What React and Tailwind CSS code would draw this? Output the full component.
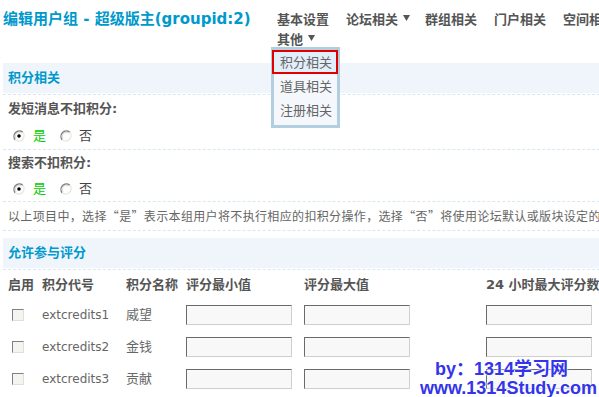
import React from "react";

function Radio({ checked }) {
  return (
    <svg width="12" height="12" viewBox="0 0 12 12" className="block">
      <circle cx="6" cy="6" r="5.4" fill="#fff" />
      <path d="M2.2 9.8 A5.4 5.4 0 0 1 9.8 2.2" stroke="#808080" fill="none" strokeWidth="1.3" />
      <path d="M9.8 2.2 A5.4 5.4 0 0 1 2.2 9.8" stroke="#e6e6de" fill="none" strokeWidth="1.3" />
      <path d="M3 8.6 A4 4 0 0 1 8.6 3" stroke="#c8c8c0" fill="none" strokeWidth="0.8" />
      {checked && <circle cx="6" cy="6" r="1.8" fill="#000" />}
    </svg>
  );
}

function Arrow() {
  return (
    <svg width="7" height="6" viewBox="0 0 7 6" className="block ml-[5px] -mt-[2px]">
      <path d="M0 0 L7 0 L3.5 6 Z" fill="#555" />
    </svg>
  );
}

function Checkbox() {
  return (
    <div className="w-[12px] h-[12px] border border-t-[#808080] border-l-[#808080] border-r-[#e0e0d8] border-b-[#e0e0d8] bg-[#f4f4f0]" />
  );
}

function Field() {
  return (
    <div className="w-[106px] h-[20px] border border-t-[#6a6a6a] border-l-[#6a6a6a] border-r-[#cfcfcf] border-b-[#cfcfcf] bg-[#f8f8f8]" />
  );
}

function Dashed() {
  return <div className="border-t border-dashed border-[#d6e8f4]" />;
}

function SectionHead({ children }) {
  return (
    <div className="h-[30px] bg-[#f0f5fc] flex items-center pl-[5px] font-bold text-[#0099cc]">
      {children}
    </div>
  );
}

const rows = [
  ["extcredits1", "威望"],
  ["extcredits2", "金钱"],
  ["extcredits3", "贡献"],
];

export default function App() {
  return (
    <div className="relative w-[599px] h-[397px] overflow-hidden bg-white text-[13px] text-[#555] font-['DejaVu_Sans','Noto_Sans_CJK_SC',sans-serif]">
      <div className="w-[680px]">
        {/* header */}
        <div className="h-[63px] flex pt-[9px] leading-[20px]">
          <div className="w-[277px] pl-[3px] font-bold text-[15px] text-[#0099cc] whitespace-nowrap">
            编辑用户组 - 超级版主(groupid:2)
          </div>
          <div className="w-[356px] h-[40px] flex flex-wrap content-start font-bold text-[13px] text-[#555] font-['Noto_Sans_CJK_SC',sans-serif]">
            <span className="h-[20px] flex items-center mr-[17px]">基本设置</span>
            <span className="h-[20px] flex items-center mr-[15px] whitespace-nowrap">
              论坛相关
              <Arrow />
            </span>
            <span className="h-[20px] flex items-center mr-[17px]">群组相关</span>
            <span className="h-[20px] flex items-center mr-[17px]">门户相关</span>
            <span className="h-[20px] flex items-center mr-[17px]">空间相关</span>
            <span className="h-[20px] flex items-center whitespace-nowrap">
              其他
              <Arrow />
            </span>
          </div>
        </div>

        {/* content */}
        <div className="ml-[3px]">
          <SectionHead>积分相关</SectionHead>
          <div className="mt-[1px]">
            <Dashed />
          </div>
          <div className="h-[27px] flex items-center pl-[5px] font-bold">发短消息不扣积分:</div>
          <div className="h-[27px] flex items-center pl-[10px]">
            <Radio checked />
            <span className="ml-[8px] text-[#00cc00]">是</span>
            <span className="ml-[14px]">
              <Radio />
            </span>
            <span className="ml-[7px] text-[#444]">否</span>
          </div>
          <Dashed />
          <div className="h-[26px] flex items-center pl-[5px] font-bold">搜索不扣积分:</div>
          <div className="h-[25px] flex items-center pl-[10px]">
            <Radio checked />
            <span className="ml-[8px] text-[#00cc00]">是</span>
            <span className="ml-[14px]">
              <Radio />
            </span>
            <span className="ml-[7px] text-[#444]">否</span>
          </div>
          <Dashed />
          <div className="h-[28px] flex items-center pl-[5px] text-[12px] text-[#666] whitespace-nowrap tracking-[0.35px] font-['Noto_Sans_CJK_SC',sans-serif]">
            以上项目中，选择“是”表示本组用户将不执行相应的扣积分操作，选择“否”将使用论坛默认或版块设定的规则
          </div>
          <Dashed />
          <div className="mt-[7px]">
            <SectionHead>允许参与评分</SectionHead>
          </div>
          <div className="mt-[1px]">
            <Dashed />
          </div>

          {/* table */}
          <div className="pl-[5px]">
            <div className="h-[29px] grid grid-cols-[34px_84px_60px_118px_182px_1fr] items-center font-bold whitespace-nowrap">
              <span>启用</span>
              <span>积分代号</span>
              <span>积分名称</span>
              <span>评分最小值</span>
              <span>评分最大值</span>
              <span>24 小时最大评分数</span>
            </div>
            {rows.map(([code, name]) => (
              <div
                key={code}
                className="h-[32px] grid grid-cols-[34px_84px_60px_118px_182px_1fr] items-center text-[#666]"
              >
                <div className="pl-[4px]">
                  <Checkbox />
                </div>
                <span className="text-[12px]">{code}</span>
                <span>{name}</span>
                <Field />
                <Field />
                <Field />
              </div>
            ))}
          </div>
        </div>
      </div>

      {/* dropdown menu */}
      <div className="absolute left-[271px] top-[47px] w-[69px] h-[81px] border-[3px] border-[#b2cfe0] bg-[#f4f8fc] text-[13px] text-[#666] font-['Noto_Sans_CJK_SC',sans-serif]">
        <div className="h-[24px] flex items-center pl-[6px] bg-[#e2eef9]">积分相关</div>
        <div className="h-[24px] flex items-center pl-[6px]">道具相关</div>
        <div className="h-[24px] flex items-center pl-[6px]">注册相关</div>
      </div>
      <div className="absolute left-[272px] top-[50px] w-[66px] h-[24px] border-2 border-[#e00000]" />

      {/* watermark */}
      <div className="absolute left-[435px] top-[358px] leading-[22px] text-[18px] font-bold text-[#3434ea] whitespace-nowrap font-['Liberation_Sans','Noto_Sans_CJK_SC',sans-serif] [text-shadow:0_0_2px_#fff,0_0_2px_#fff,0_0_1px_#fff]">
        by：1314学习网
      </div>
      <div className="absolute left-[420px] top-[377px] leading-[22px] text-[18px] font-bold text-[#3434ea] whitespace-nowrap font-['Liberation_Sans',sans-serif] [text-shadow:0_0_2px_#fff,0_0_2px_#fff,0_0_1px_#fff]">
        www.1314Study.com
      </div>
    </div>
  );
}
